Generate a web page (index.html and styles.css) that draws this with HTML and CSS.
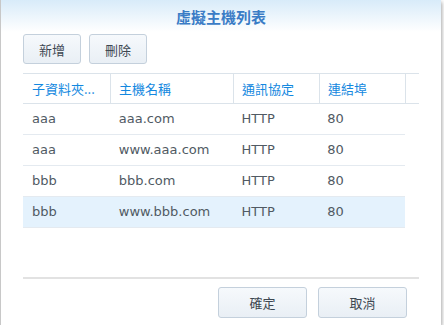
FILE: index.html
```html
<!DOCTYPE html>
<html lang="zh-Hant">
<head>
  <meta charset="UTF-8" />
  <title>虛擬主機列表</title>
  <link rel="stylesheet" href="styles.css">
</head>
<body>

  <div class="dialog">
    <div class="dialog-title">虛擬主機列表</div>

    <div class="toolbar">
      <button class="btn">新增</button>
      <button class="btn">刪除</button>
    </div>

    <div class="grid">
      <div class="grid-head">
        <div class="col col-folder">子資料夾...</div>
        <div class="col col-host">主機名稱</div>
        <div class="col col-proto">通訊協定</div>
        <div class="col col-port">連結埠</div>
        <div class="col col-spacer"></div>
      </div>

      <div class="grid-body">
        <div class="row">
          <div class="col col-folder">aaa</div>
          <div class="col col-host">aaa.com</div>
          <div class="col col-proto">HTTP</div>
          <div class="col col-port">80</div>
        </div>
        <div class="row">
          <div class="col col-folder">aaa</div>
          <div class="col col-host">www.aaa.com</div>
          <div class="col col-proto">HTTP</div>
          <div class="col col-port">80</div>
        </div>
        <div class="row">
          <div class="col col-folder">bbb</div>
          <div class="col col-host">bbb.com</div>
          <div class="col col-proto">HTTP</div>
          <div class="col col-port">80</div>
        </div>
        <div class="row selected">
          <div class="col col-folder">bbb</div>
          <div class="col col-host">www.bbb.com</div>
          <div class="col col-proto">HTTP</div>
          <div class="col col-port">80</div>
        </div>
      </div>
    </div>

    <div class="footer">
      <button class="btn btn-wide">確定</button>
      <button class="btn btn-wide">取消</button>
    </div>
  </div>

</body>
</html>
```

FILE: styles.css
```css
body {
  margin: 0;
  padding: 0;
  background: #ffffff;
  font-family: 'DejaVu Sans', 'Noto Sans CJK TC', sans-serif;
  font-size: 13px;
}

.dialog {
  box-sizing: border-box;
  width: 441px;
  height: 325px;
  padding: 0 22px;
  background: linear-gradient(#d8ebf9 0, #ffffff 32px, #ffffff 100%);
  border-left: 1px solid #c8c8c8;
  box-shadow: 1px 2px 4px rgba(0, 0, 0, 0.35);
  display: flex;
  flex-direction: column;
}

.dialog-title {
  height: 33px;
  line-height: 33px;
  text-align: center;
  font-family: 'Noto Sans CJK TC', sans-serif;
  font-size: 15px;
  font-weight: 700;
  color: #3a7cc6;
}

.toolbar {
  display: flex;
  gap: 8px;
  padding-top: 1px;
}

.btn {
  box-sizing: border-box;
  width: 58px;
  height: 30px;
  padding: 0;
  border: 1px solid #c4d0dc;
  border-radius: 3px;
  background: linear-gradient(#f6f9fc, #e9eff5);
  color: #3e4852;
  font-family: 'Noto Sans CJK TC', sans-serif;
  font-size: 13px;
}

.btn-wide {
  width: 89px;
  height: 31px;
}

.grid {
  margin-top: 9px;
  height: 203px;
  border-top: 1px solid #dbe3ea;
}

.grid-head {
  display: flex;
  height: 29px;
  border-bottom: 1px solid #dbe3ea;
  color: #1388e0;
  font-family: 'Noto Sans CJK TC', sans-serif;
}

.col {
  box-sizing: border-box;
  padding-left: 8px;
  white-space: nowrap;
  overflow: hidden;
  line-height: 29px;
}

.col.col-folder {
  padding-left: 9px;
}

.grid-head .col {
  border-right: 1px solid #dbe3ea;
}

.grid-head .col-spacer {
  border-right: none;
}

.col-folder { width: 88px; }
.col-host { width: 123px; }
.col-proto { width: 86px; }
.col-port { width: 86px; }
.col-spacer { flex: 1; }

.grid-body {
  width: 382px;
}

.row {
  display: flex;
  height: 30px;
  border-bottom: 1px solid #e4eaf0;
  color: #505a63;
}

.row .col {
  line-height: 30px;
}

.row.selected {
  background: #e4f2fd;
}

.footer {
  border-top: 2px solid #e2e2e2;
  display: flex;
  justify-content: flex-end;
  gap: 11px;
  padding-top: 8px;
  padding-right: 12px;
}
```
